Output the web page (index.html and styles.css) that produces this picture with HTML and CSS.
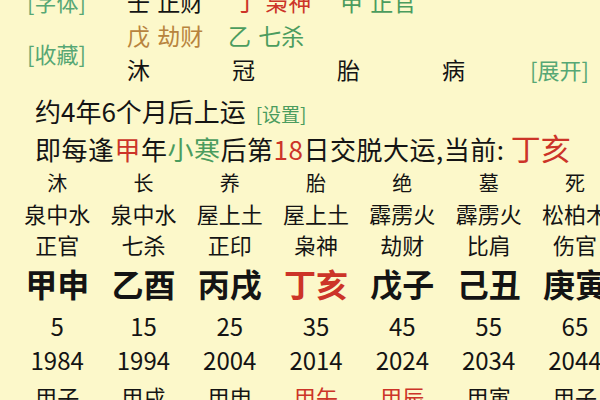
FILE: index.html
```html
<!DOCTYPE html>
<html lang="zh-CN">
<head>
<meta charset="utf-8">
<link rel="stylesheet" href="styles.css">
</head>
<body>
<div class="page">
  <div class="top">
    <div class="lab r1">[字体]</div>
    <div class="c2 r1">壬 正财</div>
    <div class="c3 r1 red">丁 枭神</div>
    <div class="c4 r1 green">甲 正官</div>
    <div class="lab r23">[收藏]</div>
    <div class="c2 r2 brown">戊 劫财</div>
    <div class="c3 r2 green">乙 七杀</div>
    <div class="c2 r3">沐</div>
    <div class="c3 r3">冠</div>
    <div class="c4 r3">胎</div>
    <div class="c5 r3">病</div>
    <div class="lab c6 r3">[展开]</div>
  </div>
  <div class="info">
    <div class="line first">约4年6个月后上运 <span class="set">[设置]</span></div>
    <div class="line wide">即每逢<span class="red">甲</span>年<span class="green">小寒</span>后第<span class="red">18</span>日交脱大运,当前: <span class="cur">丁亥</span></div>
  </div>
  <div class="yun">
    <div class="row cs"><span>沐</span><span>长</span><span>养</span><span>胎</span><span>绝</span><span>墓</span><span>死</span></div>
    <div class="row ny"><span>泉中水</span><span>泉中水</span><span>屋上土</span><span>屋上土</span><span>霹雳火</span><span>霹雳火</span><span>松柏木</span></div>
    <div class="row ss"><span>正官</span><span>七杀</span><span>正印</span><span>枭神</span><span>劫财</span><span>比肩</span><span>伤官</span></div>
    <div class="row gz"><span>甲申</span><span>乙酉</span><span>丙戌</span><span class="red">丁亥</span><span>戊子</span><span>己丑</span><span>庚寅</span></div>
    <div class="row age"><span>5</span><span>15</span><span>25</span><span>35</span><span>45</span><span>55</span><span>65</span></div>
    <div class="row yr"><span>1984</span><span>1994</span><span>2004</span><span>2014</span><span>2024</span><span>2034</span><span>2044</span></div>
    <div class="row ln"><span>甲子</span><span>甲戌</span><span>甲申</span><span class="red">甲午</span><span class="red">甲辰</span><span>甲寅</span><span>甲子</span></div>
  </div>
</div>
</body>
</html>
```
FILE: styles.css
```css
html, body {
  margin: 0;
  padding: 0;
  width: 600px;
  height: 400px;
  overflow: hidden;
  background: #fcf8ca;
}
.page {
  font-family: "Noto Sans CJK SC", "Noto Sans", sans-serif;
  color: #141414;
  width: 640px;
}
.red { color: #cc3428; }
.green { color: #4b9c5e; }
.brown { color: #b8843e; }

.top {
  display: grid;
  grid-template-columns: 100px 105px 105px 105px 88px 80px;
  grid-template-rows: 34px 34px 34px;
  padding-left: 27px;
  margin-top: -16px;
  font-size: 23px;
  line-height: 34px;
  white-space: nowrap;
  word-spacing: 2px;
}
.lab { color: #56a774; font-size: 22px; }
.r1 { grid-row: 1; }
.r2 { grid-row: 2; }
.r3 { grid-row: 3; }
.r23 { grid-row: 2 / 4; align-self: center; padding-top: 2px; }
.c2 { grid-column: 2; }
.c3 { grid-column: 3; }
.c4 { grid-column: 4; }
.c5 { grid-column: 5; }
.c6 { grid-column: 6; }
.top .c3.r2 { margin-left: -4px; }
.top .c3.r1 { margin-left: 3px; }
.top .c4.r1 { margin-left: 3px; }

.info {
  margin-top: 4px;
  padding-left: 35px;
  font-size: 26px;
  line-height: 39px;
  white-space: nowrap;
}
.first { padding-top: 2px; line-height: 37px; }
.wide { letter-spacing: 0.5px; }
.set { color: #4b9c5e; font-size: 19px; margin-left: 4px; line-height: 20px; }
.cur { color: #cc3428; font-size: 30px; line-height: 20px; letter-spacing: 0; }

.yun {
  padding-left: 14px;
}
.row {
  display: grid;
  grid-template-columns: repeat(7, 86.3px);
  text-align: center;
  white-space: nowrap;
}
.cs { font-size: 20px; height: 30px; line-height: 30px; }
.ny { font-size: 22px; height: 30px; line-height: 30px; }
.ss { font-size: 22px; height: 32px; line-height: 32px; }
.gz { font-size: 32px; font-weight: 700; line-height: 46px; padding-bottom: 2px; }
.age { font-size: 24px; height: 35px; line-height: 35px; }
.yr { font-size: 24px; height: 34px; line-height: 34px; }
.ln { font-size: 22px; height: 38px; line-height: 38px; }
```
